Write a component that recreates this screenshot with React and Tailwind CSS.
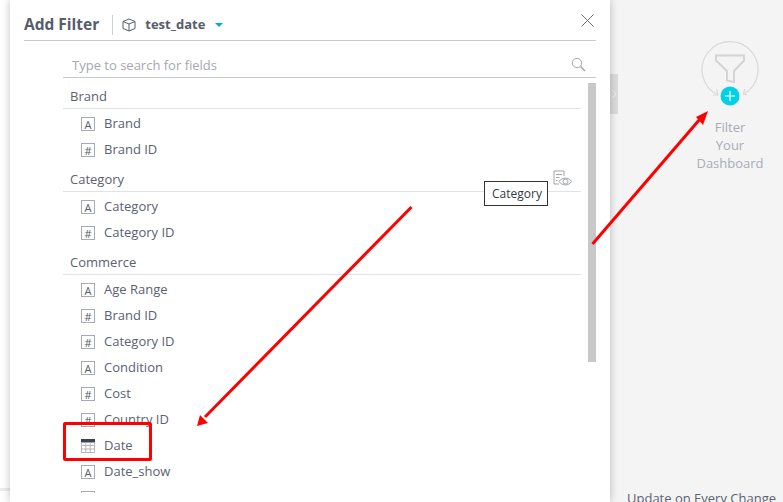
import React from "react";

const groups = [
  { name: "Brand", rows: [["A", "Brand"], ["#", "Brand ID"]] },
  { name: "Category", rows: [["A", "Category"], ["#", "Category ID"]], hover: true },
  {
    name: "Commerce",
    rows: [
      ["A", "Age Range"],
      ["#", "Brand ID"],
      ["#", "Category ID"],
      ["A", "Condition"],
      ["#", "Cost"],
      ["#", "Country ID"],
      ["D", "Date"],
      ["A", "Date_show"],
      ["A", ""],
    ],
  },
];

function TypeIcon({ type }) {
  if (type === "D") {
    return (
      <svg width="14" height="14" viewBox="0 0 14 14" className="shrink-0">
        <rect x="0" y="0" width="14" height="3.5" fill="#3a4256" />
        <path d="M.5 3.5V13.5H13.5V3.5M.5 6.5H13.5M.5 10H13.5M4.8 3.5V13.5M9.2 3.5V13.5" fill="none" stroke="#b4b7bd" strokeWidth="1" />
      </svg>
    );
  }
  return (
    <span className="w-[14px] h-[14px] shrink-0 border border-[#a8abb2] flex items-center justify-center text-[11px] leading-none text-[#555b6b]">
      {type}
    </span>
  );
}

function Row({ type, label }) {
  return (
    <div className="h-[26px] pl-[18px] flex items-center gap-[9px] text-[13px] text-[#5b6171]">
      <TypeIcon type={type} />
      <span>{label}</span>
    </div>
  );
}

function Group({ name, rows, hover }) {
  return (
    <div className="pb-[4px]">
      <div className="relative h-[25px] border-b border-[#e2e3e5] pl-[7px] pt-[2px] flex items-center text-[13px] text-[#5b6171]">
        {name}
        {hover && (
          <svg width="19" height="17" viewBox="0 0 19 17" fill="none" stroke="#a0a3aa" strokeWidth="1" className="absolute right-[9px] top-[3px]">
            <path d="M6 14H1V1H11V6" />
            <path d="M3 4.5H9M3 7.5H6.5M3 10.5H4.5" />
            <path d="M6 11.5C9 7 16 7 18.5 11.5C16 16 9 16 6 11.5Z" />
            <circle cx="12.5" cy="11.5" r="2.5" />
          </svg>
        )}
      </div>
      <div className="pt-[2px]">
        {rows.map((r, i) => (
          <Row key={i} type={r[0]} label={r[1]} />
        ))}
      </div>
    </div>
  );
}

export default function App() {
  return (
    <div className="relative w-[783px] h-[502px] overflow-hidden flex bg-[#f4f4f4] font-['Open_Sans','Noto_Sans',sans-serif]">
      <div className="w-[10px] h-full shrink-0 bg-white flex flex-col">
        <div className="h-[488px] shrink-0" />
        <div className="h-[3px] shrink-0 bg-[#ececec]" />
      </div>
      <div className="relative z-10 w-[600px] h-full shrink-0 bg-white shadow-[0_0_8px_rgba(0,0,0,0.25)] pl-[14px] pr-[14px] flex flex-col">
        <div className="h-[41px] shrink-0 border-b border-[#c9cacd] flex items-center pt-[9px]">
          <span className="text-[15.5px] font-bold text-[#565c6c] leading-none">Add Filter</span>
          <span className="ml-[13px] h-[20px] w-px bg-[#cfd0d3]" />
          <svg width="14" height="14" viewBox="0 0 14 14" fill="none" stroke="#565c6c" strokeWidth="1" className="ml-[9px]">
            <path d="M7 1L13 3.5V10.5L7 13L1 10.5V3.5Z" />
            <path d="M1 3.5L7 6L13 3.5M7 6V13" />
          </svg>
          <span className="ml-[9px] text-[13px] font-bold text-[#565c6c]">test_date</span>
          <span className="ml-[10px] w-0 h-0 border-x-[4px] border-x-transparent border-t-[4px] border-t-[#00a8e0]" />
          <svg width="13" height="13" viewBox="0 0 13 13" fill="none" stroke="#6b7080" strokeWidth="1" className="ml-auto -mt-[9px] mr-[2px]">
            <path d="M.5 .5L12.5 12.5M12.5 .5L.5 12.5" />
          </svg>
        </div>
        <div className="ml-[39px] h-[37px] shrink-0 border-b border-[#c9cacd] pl-[9px] flex items-center justify-between pt-[14px]">
          <span className="text-[13px] text-[#a5a8af]">Type to search for fields</span>
          <svg width="15" height="15" viewBox="0 0 15 15" fill="none" stroke="#a6a8ad" className="mr-[10px] -mt-[4px]">
            <circle cx="6" cy="6" r="4.7" />
            <path d="M9.5 9.5L14 14" strokeWidth="1.6" />
          </svg>
        </div>
        <div className="ml-[39px] mt-[6px] flex h-[409px] overflow-hidden">
          <div className="w-[518px] shrink-0 h-[409px] overflow-hidden">
            {groups.map((g) => (
              <Group key={g.name} {...g} />
            ))}
          </div>
        </div>
        <div className="absolute left-[578px] top-[83px] w-[8px] h-[279px] bg-[#c8c8c8]" />
        <div className="absolute left-[474px] top-[181px] w-[64px] h-[25px] pl-[7px] bg-white border border-[#333] flex items-center text-[12px] text-[#333a45]">
          Category
        </div>
      </div>

      <div className="relative flex-1 flex flex-col items-center">
        <div className="absolute left-0 top-[74px] w-[8px] h-[40px] bg-[#dcdcdc] flex items-center justify-center">
          <svg width="5" height="10" viewBox="0 0 5 10" fill="none" stroke="#f2f2f2">
            <path d="M.5 1L4 5L.5 9" />
          </svg>
        </div>
        <div className="mt-[41px] ml-[69px] flex flex-col items-center">
          <svg width="60" height="68" viewBox="0 0 60 68" fill="none" className="block">
            <path d="M17 54A28 28 0 1 1 42 53.5" stroke="#d9d9d9" strokeWidth="1.2" />
            <path d="M12 54L17 54L15.5 48M46 54L42.3 52.5L44 48" stroke="#d9d9d9" strokeWidth="1.2" />
            <path d="M15 14.5H43V19.5L33 30V41L26 39.5V30L15 19.5Z" stroke="#d4d4d4" strokeWidth="2" />
            <circle cx="29" cy="55" r="9.5" fill="#00d1e6" />
            <path d="M29 50V60M24 55H34" stroke="#fff" strokeWidth="1.2" />
          </svg>
          <div className="mt-[9px] -ml-[2px] text-[13px] leading-[18px] text-[#a9acb5] text-center">
            Filter
            <br />
            Your
            <br />
            Dashboard
          </div>
        </div>
        <div className="absolute left-[17px] top-[489px] whitespace-nowrap text-[13px] leading-[18px] text-[#5b6171]">
          Update on Every Change
        </div>
      </div>

      <div className="absolute z-20 left-[63px] top-[422px] w-[89px] h-[39px] border-[3.5px] border-[#ff0000] rounded-[2px]" />
      <svg width="783" height="502" className="absolute z-20 left-0 top-0 pointer-events-none">
        <path d="M411.5 207L205 417" stroke="#f00" strokeWidth="3" />
        <path d="M197 426L200 415L208 423Z" fill="#f00" />
        <path d="M592.5 244L700 119" stroke="#f00" strokeWidth="3" />
        <path d="M708 111L703 125L696 117Z" fill="#f00" />
      </svg>
    </div>
  );
}
